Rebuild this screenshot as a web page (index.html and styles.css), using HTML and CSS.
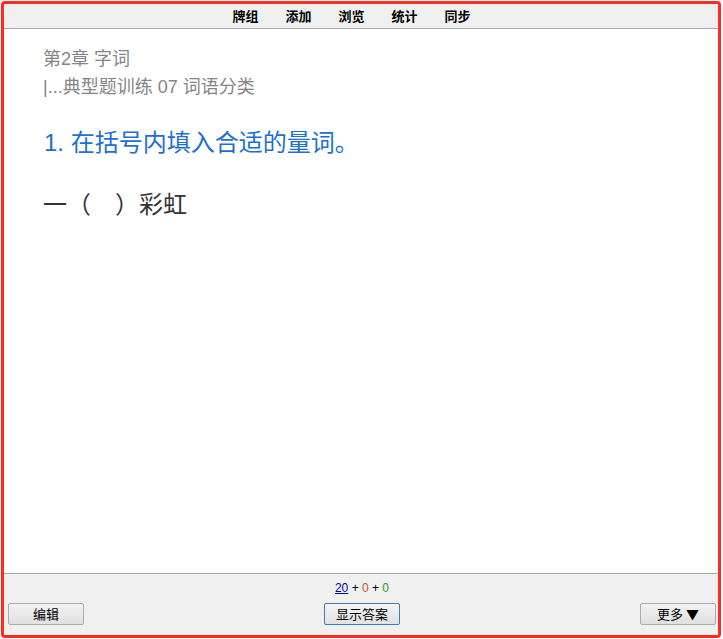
FILE: index.html
```html
<!DOCTYPE html>
<html lang="zh-CN">
<head>
<meta charset="utf-8">
<title>Anki</title>
<link rel="stylesheet" href="styles.css">
</head>
<body>
<div class="frame">
  <header class="toolbar">
    <nav class="nav">
      <span class="nav-item">牌组</span>
      <span class="nav-item">添加</span>
      <span class="nav-item">浏览</span>
      <span class="nav-item">统计</span>
      <span class="nav-item">同步</span>
    </nav>
  </header>
  <main class="card">
    <div class="meta">第2章 字词</div>
    <div class="meta">|...典型题训练 07 词语分类</div>
    <div class="title">1. 在括号内填入合适的量词。</div>
    <div class="question">一（　）彩虹</div>
  </main>
  <footer class="bottombar">
    <div class="counts"><span class="new">20</span><span class="plus"> + </span><span class="learn">0</span><span class="plus"> + </span><span class="review">0</span></div>
    <div class="buttons">
      <button class="btn">编辑</button>
      <button class="btn focus">显示答案</button>
      <button class="btn">更多 ▼</button>
    </div>
  </footer>
</div>
</body>
</html>
```
FILE: styles.css
```css
html, body {
  margin: 0;
  padding: 0;
  background: #ffffff;
}
body {
  padding: 1px 3px 1px 1px;
  height: 639px;
  box-sizing: border-box;
  overflow: hidden;
}
.frame {
  box-sizing: border-box;
  width: 720px;
  height: 637px;
  border: 3px solid #ff2a20;
  border-radius: 4px;
  display: flex;
  flex-direction: column;
  background: #ffffff;
  overflow: hidden;
}
.toolbar {
  background: #f0f0f0;
  border-bottom: 1px solid #a8a8a8;
  height: 24px;
  display: flex;
  align-items: center;
  justify-content: center;
  flex: none;
}
.nav {
  display: flex;
  gap: 27px;
  padding-right: 19px;
  font-family: "Noto Sans CJK SC", sans-serif;
  font-weight: 700;
  font-size: 13px;
  color: #000;
  line-height: 24px;
}
.card {
  flex: 1;
  padding: 16px 39px 0 39px;
  font-family: "Liberation Sans", "Noto Sans CJK SC", sans-serif;
}
.meta {
  font-size: 18px;
  line-height: 28px;
  color: #858585;
}
.title {
  margin-top: 24px;
  padding-left: 1px;
  font-size: 24px;
  line-height: 36px;
  color: #1d6fd2;
}
.question {
  margin-top: 26px;
  font-size: 24px;
  line-height: 36px;
  color: #333333;
}
.bottombar {
  flex: none;
  height: 62px;
  box-sizing: border-box;
  background: #f0f0f0;
  border-top: 1px solid #a8a8a8;
  padding: 6px 2px 0 4px;
}
.counts {
  text-align: center;
  font-family: "Liberation Sans", sans-serif;
  font-size: 12px;
  line-height: 16px;
}
.new {
  color: #0000aa;
  text-decoration: underline;
}
.plus {
  color: #000;
}
.learn {
  color: #c35617;
}
.review {
  color: #22a022;
}
.buttons {
  margin-top: 7px;
  display: flex;
  justify-content: space-between;
  align-items: center;
}
.btn {
  width: 76px;
  height: 22px;
  box-sizing: border-box;
  padding: 0;
  border: 1px solid #acacac;
  border-radius: 2px;
  background: linear-gradient(#f2f2f2, #e0e0e0);
  font-family: "Noto Sans CJK SC", sans-serif;
  font-size: 13px;
  line-height: 20px;
  color: #000;
}
.btn.focus {
  border-color: #3c7fb1;
  background: linear-gradient(#f4f4f4, #e2e2e2);
}
```
